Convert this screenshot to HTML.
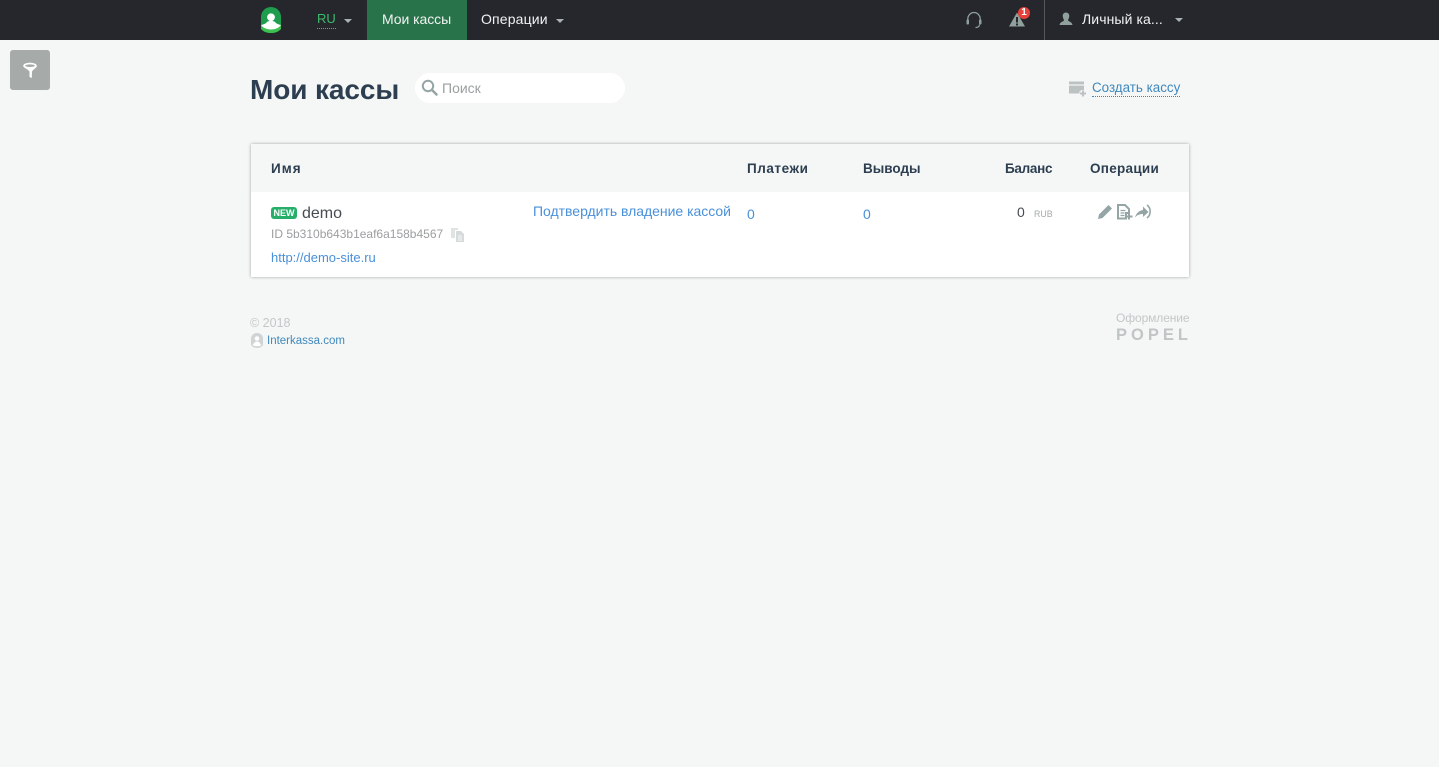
<!DOCTYPE html>
<html lang="ru"><head><meta charset="utf-8"><title>Мои кассы</title>
<style>
html,body{margin:0;padding:0}
body{width:1439px;height:767px;overflow:hidden;background:#f5f7f6;position:relative;font-family:"Liberation Sans",sans-serif;color:#2c3e50}
.a{position:absolute;white-space:nowrap}
svg{position:absolute;display:block}
.caret{position:absolute;width:0;height:0;border-left:4px solid transparent;border-right:4px solid transparent;border-top:4px solid #aab2b2}
.nav{font-size:14px;line-height:20px;color:#f0f3f3}
.th{font-size:13.5px;font-weight:bold;line-height:18px;color:#2c3e50}
.l{color:#4a90d9}
</style></head><body>
<div class="a" style="left:0;top:0;width:1439px;height:40px;background:#25272c"></div>
<svg style="left:259px;top:7px" width="24" height="27" viewBox="0 0 24 27"><path d="M2 10a10 10 0 0 1 20 0v12c-3 3-6 4-10 4s-7-1-10-4z" fill="#1f9d4f"/><path d="M2 18v4c3 3 6 4 10 4s7-1 10-4v-4c-2 3-6 4.500-10 4.500S4 21 2 18z" fill="#3cc04f"/><circle cx="12" cy="10.300" r="3.900" fill="#fff"/><path d="M2 18c3-.5 5-1.500 6-3 .8-.7 2-1 4-1s3.200.3 4 1c1 1.500 3 2.500 6 3-2 3-6 4.500-10 4.500S4 21 2 18z" fill="#fff"/></svg>
<div class="a" style="left:317px;top:9px;font-size:13px;line-height:20px;color:#3dbb6c;border-bottom:1px dotted #3dbb6c;height:19px">RU</div>
<div class="caret" style="left:344px;top:19px"></div>
<div class="a" style="left:367px;top:0;width:100px;height:40px;background:#29734a"></div>
<div class="a nav" style="left:382px;top:9px;letter-spacing:-.05px">Мои кассы</div>
<div class="a nav" style="left:481px;top:9px;letter-spacing:.15px">Операции</div>
<div class="caret" style="left:556px;top:19px"></div>
<svg style="left:965px;top:11px" width="18" height="18" viewBox="0 0 18 18"><path d="M2.800 11V8a6.200 6.500 0 0 1 12.400 0v3" fill="none" stroke="#8fa09d" stroke-width="1.300"/><rect x="1.500" y="8.500" width="2.500" height="5" rx="1" fill="#8fa09d"/><rect x="14" y="8.500" width="2.500" height="5" rx="1" fill="#8fa09d"/><path d="M14.500 13.500c0 2-1.500 3-4 3" fill="none" stroke="#8fa09d" stroke-width="1.200"/></svg>
<svg style="left:1009px;top:12px" width="16" height="15" viewBox="0 0 16 15"><path d="M8 0.500L16 14.500H0z" fill="#8fa09d"/><rect x="7" y="5" width="2" height="5.500" fill="#25272c"/><rect x="7" y="11.500" width="2" height="2" fill="#25272c"/></svg>
<div class="a" style="left:1018px;top:7px;width:12px;height:12px;border-radius:6px;background:#e8413c;color:#fff;font-size:10px;font-weight:bold;line-height:12px;text-align:center">1</div>
<div class="a" style="left:1044px;top:0;width:1px;height:40px;background:#54575c"></div>
<svg style="left:1059px;top:12px" width="14" height="14" viewBox="0 0 14 14"><path d="M7 .5c2 0 3.300 1.500 3.300 3.500S9 7.500 9 8.500c1 1 4 1.500 4.500 4.500H.5C1 10 4 9.500 5 8.500 5 7.500 3.700 6 3.700 4S5 .5 7 .5z" fill="#8fa09d"/></svg>
<div class="a nav" style="left:1082px;top:9px;letter-spacing:.1px">Личный ка...</div>
<div class="caret" style="left:1175px;top:18px"></div>

<div class="a" style="left:10px;top:50px;width:40px;height:40px;border-radius:3px;background:#a6aaa9"></div>
<svg style="left:22px;top:62px" width="16" height="17" viewBox="0 0 16 17"><path d="M1.200 4C1.200 2 4 .8 8 .8s6.800 1.200 6.800 3.200c0 1.800-3.300 3-4.800 5.500L9.800 16 7.500 15V9.500C6 7 1.200 5.800 1.200 4z" fill="#fff"/><ellipse cx="8" cy="3.700" rx="4.800" ry="1.300" fill="#a6aaa9"/></svg>

<div class="a" style="left:250px;top:72px;font-size:28px;font-weight:bold;line-height:36px;color:#2c3e50;letter-spacing:-.1px">Мои кассы</div>
<div class="a" style="left:415px;top:73px;width:210px;height:30px;border-radius:15px;background:#fff"></div>
<svg style="left:421px;top:79px" width="17" height="17" viewBox="0 0 17 17"><circle cx="7" cy="7" r="5.200" fill="none" stroke="#95a5a6" stroke-width="2"/><path d="M11 11l4.500 4.500" stroke="#95a5a6" stroke-width="2.500" stroke-linecap="round"/></svg>
<div class="a" style="left:442px;top:78px;font-size:14px;line-height:20px;color:#9a9f9f">Поиск</div>

<svg style="left:1068px;top:80px" width="19" height="17" viewBox="0 0 19 17"><path d="M1 1.500h15v12H1z" fill="#bcc2c2"/><path d="M1 5h15" stroke="#f5f7f6" stroke-width="1.200"/><path d="M15 10v7M11.500 13.500h7" stroke="#f5f7f6" stroke-width="4.500"/><path d="M15 10.500v6M12 13.500h6" stroke="#bcc2c2" stroke-width="2"/></svg>
<div class="a" style="left:1092px;top:80px;font-size:13.400px;line-height:16px;color:#3f88bd;border-bottom:1px dotted #3f88bd">Создать кассу</div>

<div class="a" style="left:251px;top:144px;width:938px;height:133px;background:#fff;box-shadow:0 0 3px rgba(0,0,0,.35)"></div>
<div class="a" style="left:251px;top:144px;width:938px;height:48px;background:#f5f7f6"></div>
<div class="a th" style="left:271px;top:160px;letter-spacing:1px">Имя</div>
<div class="a th" style="left:747px;top:160px;letter-spacing:.55px">Платежи</div>
<div class="a th" style="left:863px;top:160px">Выводы</div>
<div class="a th" style="left:1005px;top:160px;letter-spacing:-.3px">Баланс</div>
<div class="a th" style="left:1090px;top:160px;letter-spacing:.28px">Операции</div>

<div class="a" style="left:271px;top:207px;width:26px;height:12px;border-radius:3px;background:#27ae68;color:#fff;font-size:9px;font-weight:bold;line-height:12px;text-align:center">NEW</div>
<div class="a" style="left:302px;top:204px;font-size:16px;line-height:20px;color:#444b52">demo</div>
<div class="a" style="left:271px;top:225px;font-size:12px;line-height:18px;color:#9b9f9f">ID 5b310b643b1eaf6a158b4567</div>
<svg style="left:451px;top:228px" width="13" height="14" viewBox="0 0 13 14"><path d="M0 0h7v2H4v8H0z" fill="#e0e3e3"/><path d="M5 3h5l3 3v8H5z" fill="#d6dada"/><path d="M7 8h4M7 10h4M7 12h4" stroke="#f7f8f8" stroke-width="1"/></svg>
<div class="a l" style="left:271px;top:249px;font-size:13px;line-height:18px">http://demo-site.ru</div>
<div class="a l" style="left:533px;top:201px;font-size:14px;line-height:20px;letter-spacing:-.02px">Подтвердить владение кассой</div>
<div class="a l" style="left:747px;top:205px;font-size:14px;line-height:18px">0</div>
<div class="a l" style="left:863px;top:205px;font-size:14px;line-height:18px">0</div>
<div class="a" style="left:1017px;top:203px;font-size:14px;line-height:18px;color:#444b52">0</div>
<div class="a" style="left:1034px;top:208px;font-size:8.800px;line-height:12px;color:#a5aaaa">RUB</div>
<svg style="left:1097px;top:204px" width="17" height="16" viewBox="0 0 17 16"><path d="M1 15l1-4.500L11.500 1l3.500 3.500L5.500 14z" fill="#95a5a6"/></svg>
<svg style="left:1117px;top:204px" width="16" height="16" viewBox="0 0 16 16"><path d="M1 1h7l4 4v4H9v5.500H1z" fill="none" stroke="#95a5a6" stroke-width="2"/><path d="M3.500 6.500h5M3.500 9h4M3.500 11.500h4" stroke="#95a5a6" stroke-width="1.200"/><path d="M12 9.500v6M9.500 12.500h6" stroke="#95a5a6" stroke-width="2"/></svg>
<svg style="left:1135px;top:204px" width="17" height="16" viewBox="0 0 17 16"><path d="M0 13.500c1-4 4-7 8-7.500V2.500l5.500 5.500-5.500 5V10c-3.500 0-6 1-8 3.500z" fill="#95a5a6"/><path d="M12 1c4.200 2.800 4.200 10 0 13" fill="none" stroke="#95a5a6" stroke-width="1.600"/></svg>

<div class="a" style="left:250px;top:315px;font-size:12.500px;line-height:16px;color:#c3c7c7">© 2018</div>
<svg style="left:251px;top:333px" width="12" height="15" viewBox="0 0 12 15"><path d="M0 5.500a6 5.500 0 0 1 12 0V12c-1.500 2-3.500 3-6 3s-4.500-1-6-3z" fill="#d0d4d4"/><circle cx="6" cy="5.500" r="2.300" fill="#fff"/><path d="M1.500 12c1.500-1 1.500-3.500 4.500-3.500s3 2.500 4.500 3.500c-1.500 1-3 1.300-4.500 1.300s-3-.3-4.500-1.300z" fill="#fff"/></svg>
<div class="a" style="left:267px;top:333px;font-size:11.500px;line-height:16px;color:#3f88bd">Interkassa.com</div>
<div class="a" style="left:1116px;top:310px;font-size:12px;line-height:16px;color:#c3c7c7;letter-spacing:-.1px">Оформление</div>
<div class="a" style="left:1116px;top:325px;font-size:16.500px;font-weight:bold;line-height:20px;letter-spacing:4px;color:#c0c5c5">POPEL</div>
</body></html>
